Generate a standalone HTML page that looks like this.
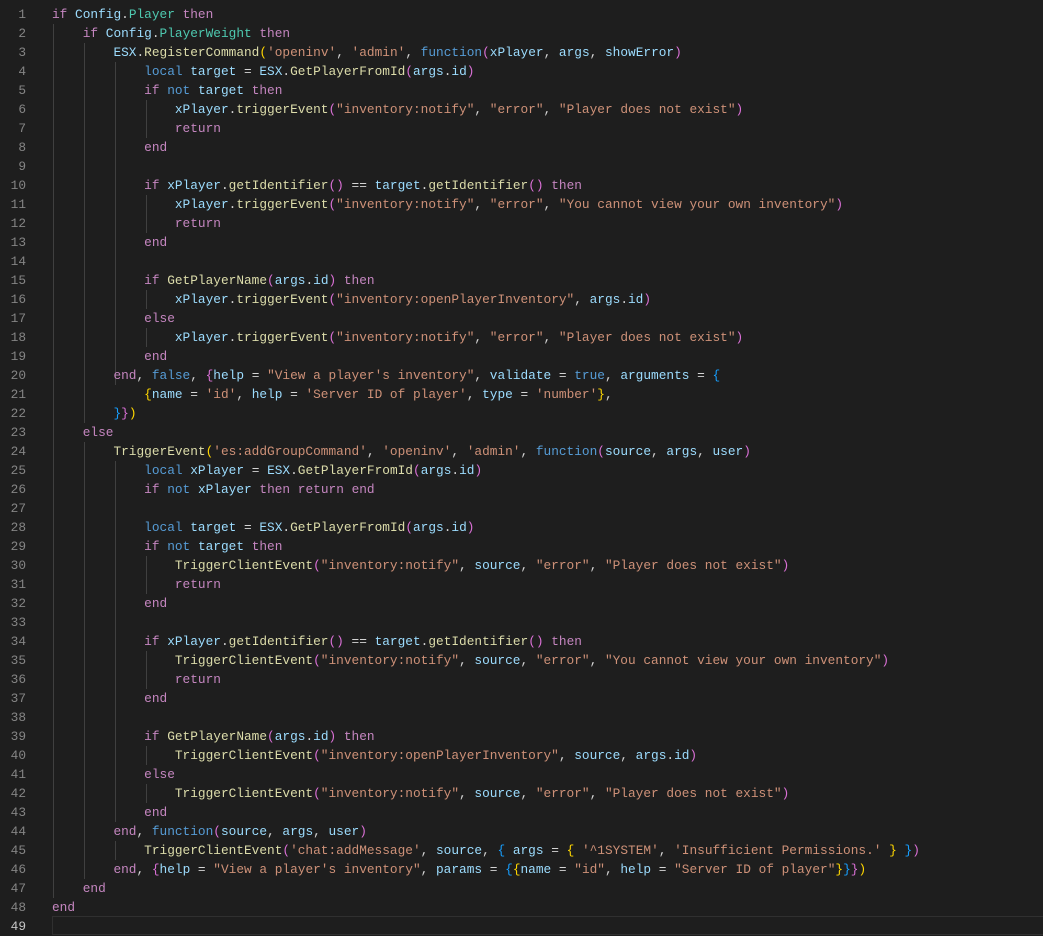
<!DOCTYPE html>
<html><head><meta charset="utf-8"><style>
body{margin:0;background:#1e1e1e;width:1043px;height:936px;overflow:hidden;position:relative;font-family:"Liberation Mono",monospace;font-size:12.8px;}
.ln{position:absolute;left:0;width:26px;text-align:right;color:#858585;line-height:19px;white-space:pre}
.code{position:absolute;left:52px;top:5px;line-height:19px;white-space:pre;color:#d4d4d4}
.nums{top:5px}
.k{color:#c586c0}.l{color:#569cd6}.v{color:#9cdcfe}.f{color:#dcdcaa}.s{color:#ce9178}.t{color:#4ec9b0}
.b1{color:#ffd700}.b2{color:#da70d6}.b3{color:#179fff}
.g{position:absolute;width:1px;background:#404040}
.cur{position:absolute;left:52px;top:916px;width:991px;height:17px;border:1px solid #303030;border-right:none}
</style></head><body>
<div class="cur"></div>
<div class="g" style="left:53px;top:24px;height:874px"></div>
<div class="g" style="left:84px;top:43px;height:380px"></div>
<div class="g" style="left:84px;top:442px;height:437px"></div>
<div class="g" style="left:115px;top:62px;height:323px"></div>
<div class="g" style="left:115px;top:461px;height:361px"></div>
<div class="g" style="left:115px;top:841px;height:19px"></div>
<div class="g" style="left:146px;top:100px;height:38px"></div>
<div class="g" style="left:146px;top:195px;height:38px"></div>
<div class="g" style="left:146px;top:290px;height:19px"></div>
<div class="g" style="left:146px;top:328px;height:19px"></div>
<div class="g" style="left:146px;top:556px;height:38px"></div>
<div class="g" style="left:146px;top:651px;height:38px"></div>
<div class="g" style="left:146px;top:746px;height:19px"></div>
<div class="g" style="left:146px;top:784px;height:19px"></div>
<div class="ln nums">1
2
3
4
5
6
7
8
9
10
11
12
13
14
15
16
17
18
19
20
21
22
23
24
25
26
27
28
29
30
31
32
33
34
35
36
37
38
39
40
41
42
43
44
45
46
47
48
<span style="color:#c6c6c6">49</span></div>
<div class="code"><span class="k">if</span> <span class="v">Config</span>.<span class="t">Player</span> <span class="k">then</span>
    <span class="k">if</span> <span class="v">Config</span>.<span class="t">PlayerWeight</span> <span class="k">then</span>
        <span class="v">ESX</span>.<span class="f">RegisterCommand</span><span class="b1">(</span><span class="s">'openinv'</span>, <span class="s">'admin'</span>, <span class="l">function</span><span class="b2">(</span><span class="v">xPlayer</span>, <span class="v">args</span>, <span class="v">showError</span><span class="b2">)</span>
            <span class="l">local</span> <span class="v">target</span> = <span class="v">ESX</span>.<span class="f">GetPlayerFromId</span><span class="b2">(</span><span class="v">args</span>.<span class="v">id</span><span class="b2">)</span>
            <span class="k">if</span> <span class="l">not</span> <span class="v">target</span> <span class="k">then</span>
                <span class="v">xPlayer</span>.<span class="f">triggerEvent</span><span class="b2">(</span><span class="s">"inventory:notify"</span>, <span class="s">"error"</span>, <span class="s">"Player does not exist"</span><span class="b2">)</span>
                <span class="k">return</span>
            <span class="k">end</span>

            <span class="k">if</span> <span class="v">xPlayer</span>.<span class="f">getIdentifier</span><span class="b2">()</span> == <span class="v">target</span>.<span class="f">getIdentifier</span><span class="b2">()</span> <span class="k">then</span>
                <span class="v">xPlayer</span>.<span class="f">triggerEvent</span><span class="b2">(</span><span class="s">"inventory:notify"</span>, <span class="s">"error"</span>, <span class="s">"You cannot view your own inventory"</span><span class="b2">)</span>
                <span class="k">return</span>
            <span class="k">end</span>

            <span class="k">if</span> <span class="f">GetPlayerName</span><span class="b2">(</span><span class="v">args</span>.<span class="v">id</span><span class="b2">)</span> <span class="k">then</span>
                <span class="v">xPlayer</span>.<span class="f">triggerEvent</span><span class="b2">(</span><span class="s">"inventory:openPlayerInventory"</span>, <span class="v">args</span>.<span class="v">id</span><span class="b2">)</span>
            <span class="k">else</span>
                <span class="v">xPlayer</span>.<span class="f">triggerEvent</span><span class="b2">(</span><span class="s">"inventory:notify"</span>, <span class="s">"error"</span>, <span class="s">"Player does not exist"</span><span class="b2">)</span>
            <span class="k">end</span>
        <span class="k">end</span>, <span class="l">false</span>, <span class="b2">{</span><span class="v">help</span> = <span class="s">"View a player's inventory"</span>, <span class="v">validate</span> = <span class="l">true</span>, <span class="v">arguments</span> = <span class="b3">{</span>
            <span class="b1">{</span><span class="v">name</span> = <span class="s">'id'</span>, <span class="v">help</span> = <span class="s">'Server ID of player'</span>, <span class="v">type</span> = <span class="s">'number'</span><span class="b1">}</span>,
        <span class="b3">}</span><span class="b2">}</span><span class="b1">)</span>
    <span class="k">else</span>
        <span class="f">TriggerEvent</span><span class="b1">(</span><span class="s">'es:addGroupCommand'</span>, <span class="s">'openinv'</span>, <span class="s">'admin'</span>, <span class="l">function</span><span class="b2">(</span><span class="v">source</span>, <span class="v">args</span>, <span class="v">user</span><span class="b2">)</span>
            <span class="l">local</span> <span class="v">xPlayer</span> = <span class="v">ESX</span>.<span class="f">GetPlayerFromId</span><span class="b2">(</span><span class="v">args</span>.<span class="v">id</span><span class="b2">)</span>
            <span class="k">if</span> <span class="l">not</span> <span class="v">xPlayer</span> <span class="k">then</span> <span class="k">return</span> <span class="k">end</span>

            <span class="l">local</span> <span class="v">target</span> = <span class="v">ESX</span>.<span class="f">GetPlayerFromId</span><span class="b2">(</span><span class="v">args</span>.<span class="v">id</span><span class="b2">)</span>
            <span class="k">if</span> <span class="l">not</span> <span class="v">target</span> <span class="k">then</span>
                <span class="f">TriggerClientEvent</span><span class="b2">(</span><span class="s">"inventory:notify"</span>, <span class="v">source</span>, <span class="s">"error"</span>, <span class="s">"Player does not exist"</span><span class="b2">)</span>
                <span class="k">return</span>
            <span class="k">end</span>

            <span class="k">if</span> <span class="v">xPlayer</span>.<span class="f">getIdentifier</span><span class="b2">()</span> == <span class="v">target</span>.<span class="f">getIdentifier</span><span class="b2">()</span> <span class="k">then</span>
                <span class="f">TriggerClientEvent</span><span class="b2">(</span><span class="s">"inventory:notify"</span>, <span class="v">source</span>, <span class="s">"error"</span>, <span class="s">"You cannot view your own inventory"</span><span class="b2">)</span>
                <span class="k">return</span>
            <span class="k">end</span>

            <span class="k">if</span> <span class="f">GetPlayerName</span><span class="b2">(</span><span class="v">args</span>.<span class="v">id</span><span class="b2">)</span> <span class="k">then</span>
                <span class="f">TriggerClientEvent</span><span class="b2">(</span><span class="s">"inventory:openPlayerInventory"</span>, <span class="v">source</span>, <span class="v">args</span>.<span class="v">id</span><span class="b2">)</span>
            <span class="k">else</span>
                <span class="f">TriggerClientEvent</span><span class="b2">(</span><span class="s">"inventory:notify"</span>, <span class="v">source</span>, <span class="s">"error"</span>, <span class="s">"Player does not exist"</span><span class="b2">)</span>
            <span class="k">end</span>
        <span class="k">end</span>, <span class="l">function</span><span class="b2">(</span><span class="v">source</span>, <span class="v">args</span>, <span class="v">user</span><span class="b2">)</span>
            <span class="f">TriggerClientEvent</span><span class="b2">(</span><span class="s">'chat:addMessage'</span>, <span class="v">source</span>, <span class="b3">{</span> <span class="v">args</span> = <span class="b1">{</span> <span class="s">'^1SYSTEM'</span>, <span class="s">'Insufficient Permissions.'</span> <span class="b1">}</span> <span class="b3">}</span><span class="b2">)</span>
        <span class="k">end</span>, <span class="b2">{</span><span class="v">help</span> = <span class="s">"View a player's inventory"</span>, <span class="v">params</span> = <span class="b3">{</span><span class="b1">{</span><span class="v">name</span> = <span class="s">"id"</span>, <span class="v">help</span> = <span class="s">"Server ID of player"</span><span class="b1">}</span><span class="b3">}</span><span class="b2">}</span><span class="b1">)</span>
    <span class="k">end</span>
<span class="k">end</span>
</div>
</body></html>
